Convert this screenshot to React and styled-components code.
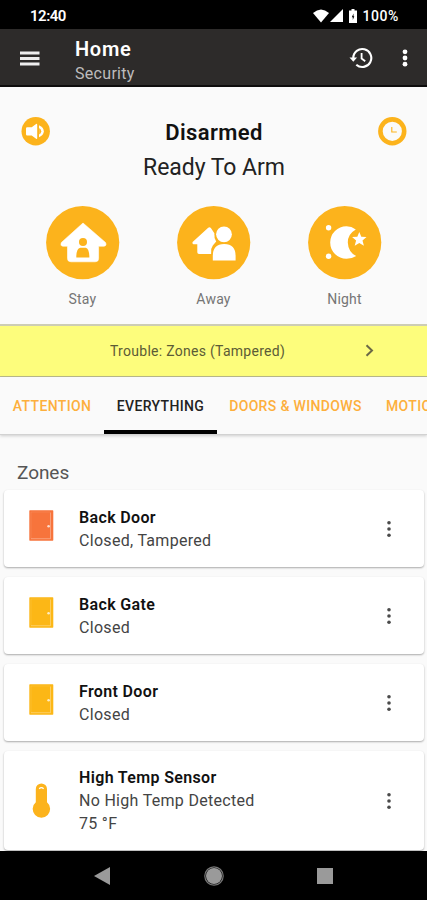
import styled, { createGlobalStyle } from "styled-components"

const GlobalStyle = createGlobalStyle`
  * {
    box-sizing: border-box;
  }
  body {
    margin: 0;
    background: #fafafa;
    font-family: Roboto, "Liberation Sans", sans-serif;
  }
  svg {
    display: block;
    flex-shrink: 0;
  }
`

const Phone = styled.div`
  display: flex;
  flex-direction: column;
  width: 427px;
  height: 900px;
  overflow: hidden;
  background: #fafafa;
`

const Label = styled.div`
  font-size: ${(p) => p.$size}px;
  line-height: ${(p) => p.$line}px;
  font-weight: ${(p) => p.$weight || 400};
  color: ${(p) => p.$color || "#111"};
  letter-spacing: ${(p) => p.$spacing || 0}px;
  white-space: nowrap;
`

const StatusBar = styled.div`
  display: flex;
  align-items: center;
  justify-content: space-between;
  flex-shrink: 0;
  height: 29px;
  padding: 2px 28px 0 30px;
  background: #000;
`

const StatusIcons = styled.div`
  display: flex;
  align-items: center;
`

const StatusGlyph = styled.div`
  margin-right: ${(p) => p.$gap}px;
`

const AppBar = styled.header`
  display: flex;
  align-items: center;
  flex-shrink: 0;
  height: 58px;
  padding: 2px 19px 0 20px;
  background: #2d2b2a;
  border-bottom: 2px solid #0e0d0d;
`

const AppTitle = styled.div`
  flex: 1;
  margin: 7px 0 0 35px;
`

const BarActions = styled.div`
  display: flex;
  align-items: center;
  gap: 29px;
`

const ArmPanel = styled.section`
  flex-shrink: 0;
  height: 237px;
  padding-top: 30px;
`

const ArmStatus = styled.div`
  display: flex;
  justify-content: space-between;
  padding: 0 20px 0 21px;
`

const StatusText = styled.div`
  display: flex;
  flex-direction: column;
  align-items: center;
`

const ArmModes = styled.div`
  display: flex;
  padding: 19px 17px 0;
`

const ArmMode = styled.div`
  flex: 1;
  display: flex;
  flex-direction: column;
  align-items: center;
  gap: 9px;
`

const TroubleBar = styled.div`
  display: flex;
  align-items: center;
  flex-shrink: 0;
  height: 53px;
  padding: 0 53px 1px 110px;
  justify-content: space-between;
  background: #fdfd7c;
  border-top: 2px solid #cdcdb4;
  border-bottom: 1px solid #bcbc8c;
`

const Tabs = styled.nav`
  display: flex;
  flex-shrink: 0;
  height: 58px;
  background: #fafafa;
  border-bottom: 1px solid #d2d2d2;
  box-shadow: 0 1px 3px rgba(0, 0, 0, 0.18);
`

const Tab = styled.div`
  flex: 0 0 ${(p) => p.$width}px;
  display: flex;
  align-items: center;
  justify-content: ${(p) => (p.$cut ? "flex-start" : "center")};
  padding: ${(p) => (p.$cut ? "4px 0 0 12px" : "4px 0 0")};
  height: 57px;
  border-bottom: 4px solid ${(p) => (p.$active ? "#000" : "transparent")};
`

const ZoneList = styled.main`
  flex: 1;
  min-height: 0;
  overflow: hidden;
  padding: 26px 3px 0 4px;
`

const ZoneHeading = styled.div`
  padding: 0 0 6px 13px;
`

const ZoneCard = styled.article`
  display: flex;
  align-items: center;
  height: ${(p) => p.$height}px;
  margin-bottom: 10px;
  padding: 0 32px 0 19px;
  background: #fff;
  border-radius: 4px;
  box-shadow: 0 1px 2px rgba(0, 0, 0, 0.32);
`

const ZoneIcon = styled.div`
  width: 56px;
  padding: ${(p) => p.$pad};
`

const ZoneText = styled.div`
  flex: 1;
  padding-top: 1px;
`

const NavBar = styled.footer`
  display: flex;
  align-items: center;
  justify-content: space-between;
  flex-shrink: 0;
  height: 49px;
  padding: 0 94px;
  background: #000;
`

const orange = "#fcb31c"

function WifiIcon() {
  return (
    <svg width="16" height="14" viewBox="0 0 16 14" fill="#fff">
      <path d="M0 4 Q8 -3 16 4 L8 13.5Z" />
    </svg>
  )
}

function SignalIcon() {
  return (
    <svg width="13" height="13" viewBox="0 0 13 13" fill="#fff">
      <path d="M13 0V13H0Z" />
    </svg>
  )
}

function BatteryIcon() {
  return (
    <svg width="8" height="14" viewBox="0 0 8 14" fill="#fff">
      <path d="M2.5 0h3v1.5H8V14H0V1.5h2.5z" />
      <path d="M4.5 4.5L2.8 8.2h1V11L5.3 7.3h-.8z" fill="#000" />
    </svg>
  )
}

function MenuIcon() {
  return (
    <svg width="20" height="15" viewBox="0 0 20 15" fill="#eee">
      <path d="M0 .5h19.5v3H0zM0 6h19.5v3H0zM0 11.5h19.5v3H0z" />
    </svg>
  )
}

function HistoryIcon() {
  return (
    <svg width="24" height="24" viewBox="0 0 24 24" fill="none" stroke="#fff" strokeWidth="2.1">
      <path d="M4.3 12a9 9 0 1 1 3 6.7" />
      <path d="M12.6 7v5.5l3.6 2.8" strokeWidth="1.8" />
      <path d="M.5 11.5h7.6l-3.8 4.2z" fill="#fff" stroke="none" />
    </svg>
  )
}

function MoreIcon({ color, r, step }) {
  return (
    <svg width="6" height="20" viewBox="0 0 6 20" fill={color}>
      <circle cx="3" cy={10 - step} r={r} />
      <circle cx="3" cy="10" r={r} />
      <circle cx="3" cy={10 + step} r={r} />
    </svg>
  )
}

function SoundIcon() {
  return (
    <svg width="29" height="29" viewBox="0 0 29 29">
      <circle cx="14.7" cy="14.2" r="14.2" fill={orange} />
      <path d="M6.2 10.2h4.5l4.4-3.2q1.1-.5 1.1.8v13.4q0 1.2-1.1.6l-4.4-3.3H6.2q-1.2 0-1.2-1.2v-5.9q0-1.2 1.2-1.2z" fill="#fff" />
      <path d="M18 8.2q4.8 2.2 4.8 6.1T18 20.3z" fill="#fff" />
      <path d="M18.2 11q2 1.2 2 3.3t-2 3.3z" fill={orange} />
    </svg>
  )
}

function ClockIcon() {
  return (
    <svg width="29" height="29" viewBox="0 0 29 29" fill="none" stroke={orange}>
      <circle cx="14.3" cy="14.3" r="11.9" strokeWidth="4.6" />
      <path d="M13.8 10v5h5" strokeWidth="1.1" />
    </svg>
  )
}

function StayIcon() {
  return (
    <svg width="74" height="74" viewBox="0 0 74 74">
      <circle cx="36.7" cy="36.6" r="36.6" fill={orange} />
      <path
        d="M37 17L15.4 36.5Q14 40.2 17 40.2H21.5V52.5Q21.5 55.8 25 55.8H49.2Q52.6 55.8 52.6 52.5V40.2H58Q61 39.8 59.5 36.5Z"
        fill="#fff"
        stroke="#fff"
        strokeWidth=".6"
        strokeLinejoin="round"
      />
      <circle cx="37" cy="36" r="4" fill={orange} />
      <path d="M30.3 51.5q0-9.3 4-9.8h5.4q3.5.5 3.7 9.8z" fill={orange} />
    </svg>
  )
}

function AwayIcon() {
  return (
    <svg width="74" height="74" viewBox="0 0 74 74" fill="#fff">
      <circle cx="36.7" cy="36.6" r="36.6" fill={orange} />
      <path d="M15.6 36L31.2 21.8Q32.5 20.8 33.9 22L37.5 27.5Q36.8 32 39.2 35.5L35.8 39.5L34.2 43V48H22Q20.3 48 20.3 46.2V38.3H16.3Q14.8 37.5 15.6 36Z" />
      <circle cx="47" cy="28.3" r="9.3" fill={orange} />
      <circle cx="47" cy="28.3" r="7.9" />
      <path d="M35.8 54.5V50Q35.8 38 47.2 38T58.6 50V54.5Z" stroke={orange} strokeWidth="2.6" />
      <path d="M35.8 54.5V50Q35.8 38 47.2 38T58.6 50V54.5Z" />
    </svg>
  )
}

function NightIcon() {
  return (
    <svg width="74" height="74" viewBox="0 0 74 74" fill="#fff">
      <circle cx="36.7" cy="36.6" r="36.6" fill={orange} />
      <path d="M47.8 23.5Q43.5 20.2 38.5 20.2A16.3 16.3 0 0 0 38.5 52.8Q44 52.8 48.2 50Q40.2 46.2 39.8 36.5Q39.8 28 47.8 23.5Z" />
      <path d="M51.3 26l2 4.8 5.2.3-4 3.5 1.4 5.1-4.6-2.8-4.6 2.8 1.4-5.1-4-3.5 5.2-.3z" />
      <circle cx="20.6" cy="21.8" r="2.7" />
      <circle cx="20.6" cy="50.3" r="2.7" />
    </svg>
  )
}

function DoorIcon({ color }) {
  return (
    <svg width="25" height="31" viewBox="0 0 25 31">
      <rect x=".3" y=".3" width="24" height="30.4" rx=".6" fill={color} />
      <path d="M2 28.7V2h19" fill="none" stroke="#fff" strokeOpacity=".15" strokeWidth=".6" />
      <path d="M2 28.7h19.5V2.5" fill="none" stroke="#fff" strokeOpacity=".45" strokeWidth=".7" />
      <circle cx="19.6" cy="16.3" r="1.3" fill="#fff" fillOpacity=".75" />
    </svg>
  )
}

function ThermometerIcon() {
  return (
    <svg width="19" height="36" viewBox="0 0 19 36">
      <path d="M3.8 19.3V6a5.6 5.6 0 0 1 11.2 0v13.3a8.7 8.7 0 1 1-11.2 0z" fill={orange} />
      <path d="M7.2 5.8q2.2-2.4 4.4 0" fill="none" stroke="#fff" strokeWidth="1.3" />
    </svg>
  )
}

const modes = [
  { name: "Stay", Icon: StayIcon },
  { name: "Away", Icon: AwayIcon },
  { name: "Night", Icon: NightIcon },
]

const tabs = [
  { name: "ATTENTION", width: 104 },
  { name: "EVERYTHING", width: 113, active: true },
  { name: "DOORS & WINDOWS", width: 157 },
  { name: "MOTION", width: 90, cut: true },
]

const zones = [
  { name: "Back Door", lines: ["Closed, Tampered"], color: "#f7743c" },
  { name: "Back Gate", lines: ["Closed"], color: "#fcb716" },
  { name: "Front Door", lines: ["Closed"], color: "#fcb716" },
  { name: "High Temp Sensor", lines: ["No High Temp Detected", "75 °F"], temp: true },
]

function App() {
  return (
    <Phone>
      <GlobalStyle />
      <StatusBar>
        <Label $size={15} $line={20} $weight={600} $color="#fff" $spacing={-0.5}>12:40</Label>
        <StatusIcons>
          <StatusGlyph $gap={1}><WifiIcon /></StatusGlyph>
          <StatusGlyph $gap={6}><SignalIcon /></StatusGlyph>
          <StatusGlyph $gap={5}><BatteryIcon /></StatusGlyph>
          <Label $size={14} $line={20} $weight={500} $color="#fff" $spacing={0.6}>100%</Label>
        </StatusIcons>
      </StatusBar>

      <AppBar>
        <MenuIcon />
        <AppTitle>
          <Label $size={20} $line={25} $weight={600} $color="#fff" $spacing={0.7}>Home</Label>
          <Label $size={16} $line={24} $color="#bdbcbc" $spacing={0.3}>Security</Label>
        </AppTitle>
        <BarActions>
          <HistoryIcon />
          <MoreIcon color="#fff" r={2.4} step={6.2} />
        </BarActions>
      </AppBar>

      <ArmPanel>
        <ArmStatus>
          <SoundIcon />
          <StatusText>
            <Label $size={22} $line={31} $weight={600} $spacing={0.4}>Disarmed</Label>
            <Label $size={23} $line={39} $color="#222" $spacing={-0.05}>Ready To Arm</Label>
          </StatusText>
          <ClockIcon />
        </ArmStatus>
        <ArmModes>
          {modes.map(({ name, Icon }) => (
            <ArmMode key={name}>
              <Icon />
              <Label $size={14} $line={20} $color="#757575" $spacing={0.2}>{name}</Label>
            </ArmMode>
          ))}
        </ArmModes>
      </ArmPanel>

      <TroubleBar>
        <Label $size={14} $line={20} $color="#5c5b36" $spacing={0.28}>Trouble: Zones (Tampered)</Label>
        <svg width="9" height="13" viewBox="0 0 9 13" fill="none" stroke="#6b6947" strokeWidth="2">
          <path d="M1.5 1.2L7 6.5l-5.5 5.3" />
        </svg>
      </TroubleBar>

      <Tabs>
        {tabs.map((tab) => (
          <Tab key={tab.name} $width={tab.width} $active={tab.active} $cut={tab.cut}>
            <Label $size={14} $line={20} $weight={500} $color={tab.active ? "#222" : "#fdaf3c"} $spacing={0.35}>
              {tab.name}
            </Label>
          </Tab>
        ))}
      </Tabs>

      <ZoneList>
        <ZoneHeading>
          <Label $size={19} $line={23} $color="#555" $spacing={-0.05}>Zones</Label>
        </ZoneHeading>
        {zones.map((zone) => (
          <ZoneCard key={zone.name} $height={zone.temp ? 99 : 77}>
            <ZoneIcon $pad={zone.temp ? "0 0 0 9px" : "0 0 6px 6px"}>
              {zone.temp ? <ThermometerIcon /> : <DoorIcon color={zone.color} />}
            </ZoneIcon>
            <ZoneText>
              <Label $size={16} $line={22} $weight={600} $spacing={0.35}>{zone.name}</Label>
              {zone.lines.map((line) => (
                <Label key={line} $size={16} $line={23} $color="#444" $spacing={0.3}>{line}</Label>
              ))}
            </ZoneText>
            <MoreIcon color="#4a4a4a" r={1.8} step={6.3} />
          </ZoneCard>
        ))}
      </ZoneList>

      <NavBar>
        <svg width="16" height="18" viewBox="0 0 16 18" fill="#9a9a9a">
          <path d="M0 9L16 0v18z" />
        </svg>
        <svg width="20" height="20" viewBox="0 0 20 20" fill="#9a9a9a">
          <circle cx="10" cy="10" r="8" />
          <circle cx="10" cy="10" r="9.2" fill="none" stroke="#777" strokeWidth="1.2" />
        </svg>
        <svg width="16" height="16" viewBox="0 0 16 16" fill="#9a9a9a">
          <rect width="16" height="16" />
        </svg>
      </NavBar>
    </Phone>
  )
}

export default App
